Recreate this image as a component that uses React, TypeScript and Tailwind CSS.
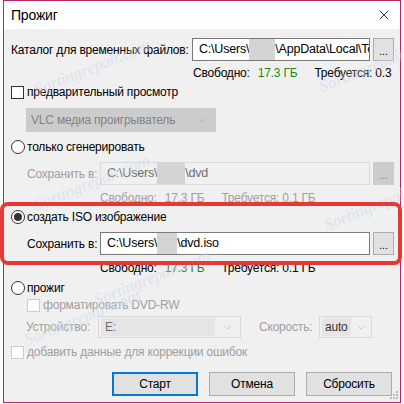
import { ChevronDown, X } from 'lucide-react';

const font = { fontFamily: '"Liberation Sans", Arial, sans-serif' };

function Box({ checked = false, disabled = false }: { checked?: boolean; disabled?: boolean }) {
  return (
    <span
      className={
        'inline-block w-[13px] h-[13px] border bg-white shrink-0 ' +
        (disabled ? 'border-[#cccccc]' : 'border-[#333333]')
      }
    >
      {checked && <span className="block w-full h-full bg-[#333]" />}
    </span>
  );
}

function Radio({ checked = false }: { checked?: boolean }) {
  return (
    <span className="inline-flex w-[14px] h-[14px] rounded-full border border-[#333333] bg-white items-center justify-center shrink-0">
      {checked && <span className="block w-[8px] h-[8px] rounded-full bg-[#333333]" />}
    </span>
  );
}

function Blur({ w }: { w: number }) {
  return <span className="inline-block h-[21px] bg-[#d4d4d4] shrink-0" style={{ width: w }} />;
}

function PathInput({ before, after, blur, disabled = false, width }: { before: string; after: string; blur: number; disabled?: boolean; width: string }) {
  return (
    <div
      className={
        'h-[23px] border flex items-center pl-[6px] overflow-hidden text-[12.5px] shrink-0 ' +
        width +
        (disabled ? ' border-[#d9d9d9] bg-[#f0f0f0] text-[#6d6d6d]' : ' border-[#7a7a7a] bg-white text-black')
      }
    >
      <span className="shrink-0">{before}</span>
      <Blur w={blur} />
      <span className="shrink-0">{after}</span>
    </div>
  );
}

function DotsButton({ disabled = false }: { disabled?: boolean }) {
  return (
    <div
      className={
        'w-[21px] h-[23px] border flex items-center justify-center text-[11px] leading-none pt-[4px] shrink-0 ' +
        (disabled ? 'border-[#cccccc] bg-[#cccccc] text-[#838383]' : 'border-[#adadad] bg-[#e1e1e1] text-black')
      }
    >
      ...
    </div>
  );
}

function FreeRow({ need, disabled = false }: { need: string; disabled?: boolean }) {
  return (
    <div className={'h-[16px] flex items-center ' + (disabled ? 'text-[#a0a0a0]' : 'text-black')}>
      <span>Свободно:</span>
      <span className={'ml-[8px] ' + (disabled ? '' : 'text-[#1d8a1d]')}>17.3 ГБ</span>
      <span className="ml-[17px]">Требуется: {need}</span>
    </div>
  );
}

function Mark({ className }: { className: string }) {
  return (
    <span
      className={'absolute text-[17px] font-bold italic text-[#c9d3e8] opacity-40 pointer-events-none ' + className}
      style={{ fontFamily: '"Liberation Serif", serif', textShadow: '0 0 2px #fff' }}
    >
      Sortingrepair.com
    </span>
  );
}

export default function App() {
  return (
    <div className="w-[404px] h-[404px] bg-white relative overflow-hidden text-[12px] tracking-[-0.2px] whitespace-nowrap" style={font}>
      <div className="ml-[3px] w-[398px] h-[403px] border border-[#b8285f] flex flex-col">
        {/* title bar */}
        <div className="h-[28px] bg-white flex items-center justify-between pl-[7px] pr-[8px] shrink-0">
          <span className="text-[14px] text-black">Прожиг</span>
          <X size={16} strokeWidth={1.2} className="text-black" />
        </div>

        <div className="flex-1 bg-[#f0f0f0] pl-[7px] text-black">
          {/* temp dir */}
          <div className="mt-[9px] h-[23px] flex items-center">
            <span className="w-[181px] shrink-0">Каталог для временных файлов:</span>
            <PathInput width="w-[178px]" before="C:\Users\" after="\AppData\Local\Temp" blur={26} />
            <div className="ml-[3px]">
              <DotsButton />
            </div>
          </div>
          <div className="mt-[4px] pl-[182px]">
            <FreeRow need="0.3" />
          </div>

          {/* preview */}
          <div className="mt-[3px] h-[16px] flex items-center gap-[3px]">
            <Box />
            <span>предварительный просмотр</span>
          </div>
          <div className="mt-[8px] ml-[15px] w-[190px] h-[24px] bg-[#cccccc] border border-[#cccccc] flex items-center justify-between pl-[4px] pr-[6px] text-[#838383]">
            <span>VLC медиа проигрыватель</span>
            <ChevronDown size={13} strokeWidth={1} className="text-[#9a9a9a]" />
          </div>

          {/* generate only */}
          <div className="mt-[7px] h-[16px] flex items-center gap-[2px]">
            <Radio />
            <span>только сгенерировать</span>
          </div>
          <div className="mt-[7px] h-[23px] flex items-center pl-[16px]">
            <span className="w-[73px] shrink-0 text-[#a0a0a0]">Сохранить в:</span>
            <PathInput width="w-[270px]" before="C:\Users\" after="\dvd" blur={28} disabled />
            <div className="ml-[3px]">
              <DotsButton disabled />
            </div>
          </div>
          <div className="mt-[5px] pl-[89px]">
            <FreeRow need="0.1 ГБ" disabled />
          </div>

          {/* ISO */}
          <div className="mt-[3px] h-[16px] flex items-center gap-[2px]">
            <Radio checked />
            <span>создать ISO изображение</span>
          </div>
          <div className="mt-[7px] h-[23px] flex items-center pl-[16px]">
            <span className="w-[73px] shrink-0">Сохранить в:</span>
            <PathInput width="w-[270px]" before="C:\Users\" after="\dvd.iso" blur={20} />
            <div className="ml-[3px]">
              <DotsButton />
            </div>
          </div>
          <div className="mt-[5px] pl-[89px]">
            <FreeRow need="0.1 ГБ" />
          </div>

          {/* burn */}
          <div className="mt-[4px] h-[16px] flex items-center gap-[2px]">
            <Radio />
            <span>прожиг</span>
          </div>
          <div className="mt-[1px] h-[16px] flex items-center gap-[3px] pl-[16px] text-[#a0a0a0]">
            <Box disabled />
            <span>форматировать DVD-RW</span>
          </div>
          <div className="mt-[3px] h-[22px] flex items-center pl-[15px] text-[#a0a0a0]">
            <span className="w-[72px] shrink-0">Устройство:</span>
            <div className="w-[143px] h-[22px] border border-[#d9d9d9] bg-[#f0f0f0] flex items-center pr-[6px] shrink-0">
              <span className="flex-1 h-[18px] ml-[2px] mr-[6px] bg-[#e5e5e5] pl-[4px] text-[#6d6d6d] leading-[18px]">E:</span>
              <ChevronDown size={13} strokeWidth={1} className="text-[#a0a0a0]" />
            </div>
            <span className="ml-[18px] w-[60px] shrink-0">Скорость:</span>
            <div className="w-[53px] h-[22px] border border-[#d9d9d9] bg-[#f0f0f0] flex items-center pr-[4px] shrink-0">
              <span className="h-[18px] ml-[2px] mr-[4px] bg-[#e5e5e5] px-[3px] text-[#333] leading-[18px]">auto</span>
              <ChevronDown size={13} strokeWidth={1} className="text-[#a0a0a0]" />
            </div>
          </div>
          <div className="mt-[6px] h-[16px] flex items-center gap-[3px] text-[#a0a0a0]">
            <Box disabled />
            <span>добавить данные для коррекции ошибок</span>
          </div>

          {/* buttons */}
          <div className="mt-[12px] flex gap-[11px] pl-[101px]">
            <button className="w-[86px] h-[24px] border-2 border-[#0078d7] bg-[#e1e1e1]">Старт</button>
            <button className="w-[86px] h-[24px] border border-[#adadad] bg-[#e1e1e1]">Отмена</button>
            <button className="w-[86px] h-[24px] border border-[#adadad] bg-[#e1e1e1]">Сбросить</button>
          </div>
        </div>
      </div>

      {/* resize grip */}
      <svg className="absolute left-[389px] top-[390px]" width="10" height="10" viewBox="0 0 10 10">
        {[[8, 2], [5, 5], [8, 5], [2, 8], [5, 8], [8, 8]].map(([x, y]) => (
          <rect key={`${x}-${y}`} x={x - 1} y={y - 1} width="2" height="2" fill="#b8b8b8" />
        ))}
      </svg>

      {/* watermarks */}
      <Mark className="left-[30px] top-[55px] -rotate-[22deg]" />
      <Mark className="left-[315px] top-[52px] -rotate-[22deg]" />
      <Mark className="left-[30px] top-[170px] -rotate-[22deg]" />
      <Mark className="left-[320px] top-[190px] -rotate-[22deg]" />
      <Mark className="left-[90px] top-[265px] -rotate-[22deg]" />
      <Mark className="left-[20px] top-[305px] -rotate-[22deg]" />

      {/* highlight annotation */}
      <div className="absolute left-0 top-[202px] w-[402px] h-[63px] border-4 border-[#e53935] rounded-[8px]" />
    </div>
  );
}
